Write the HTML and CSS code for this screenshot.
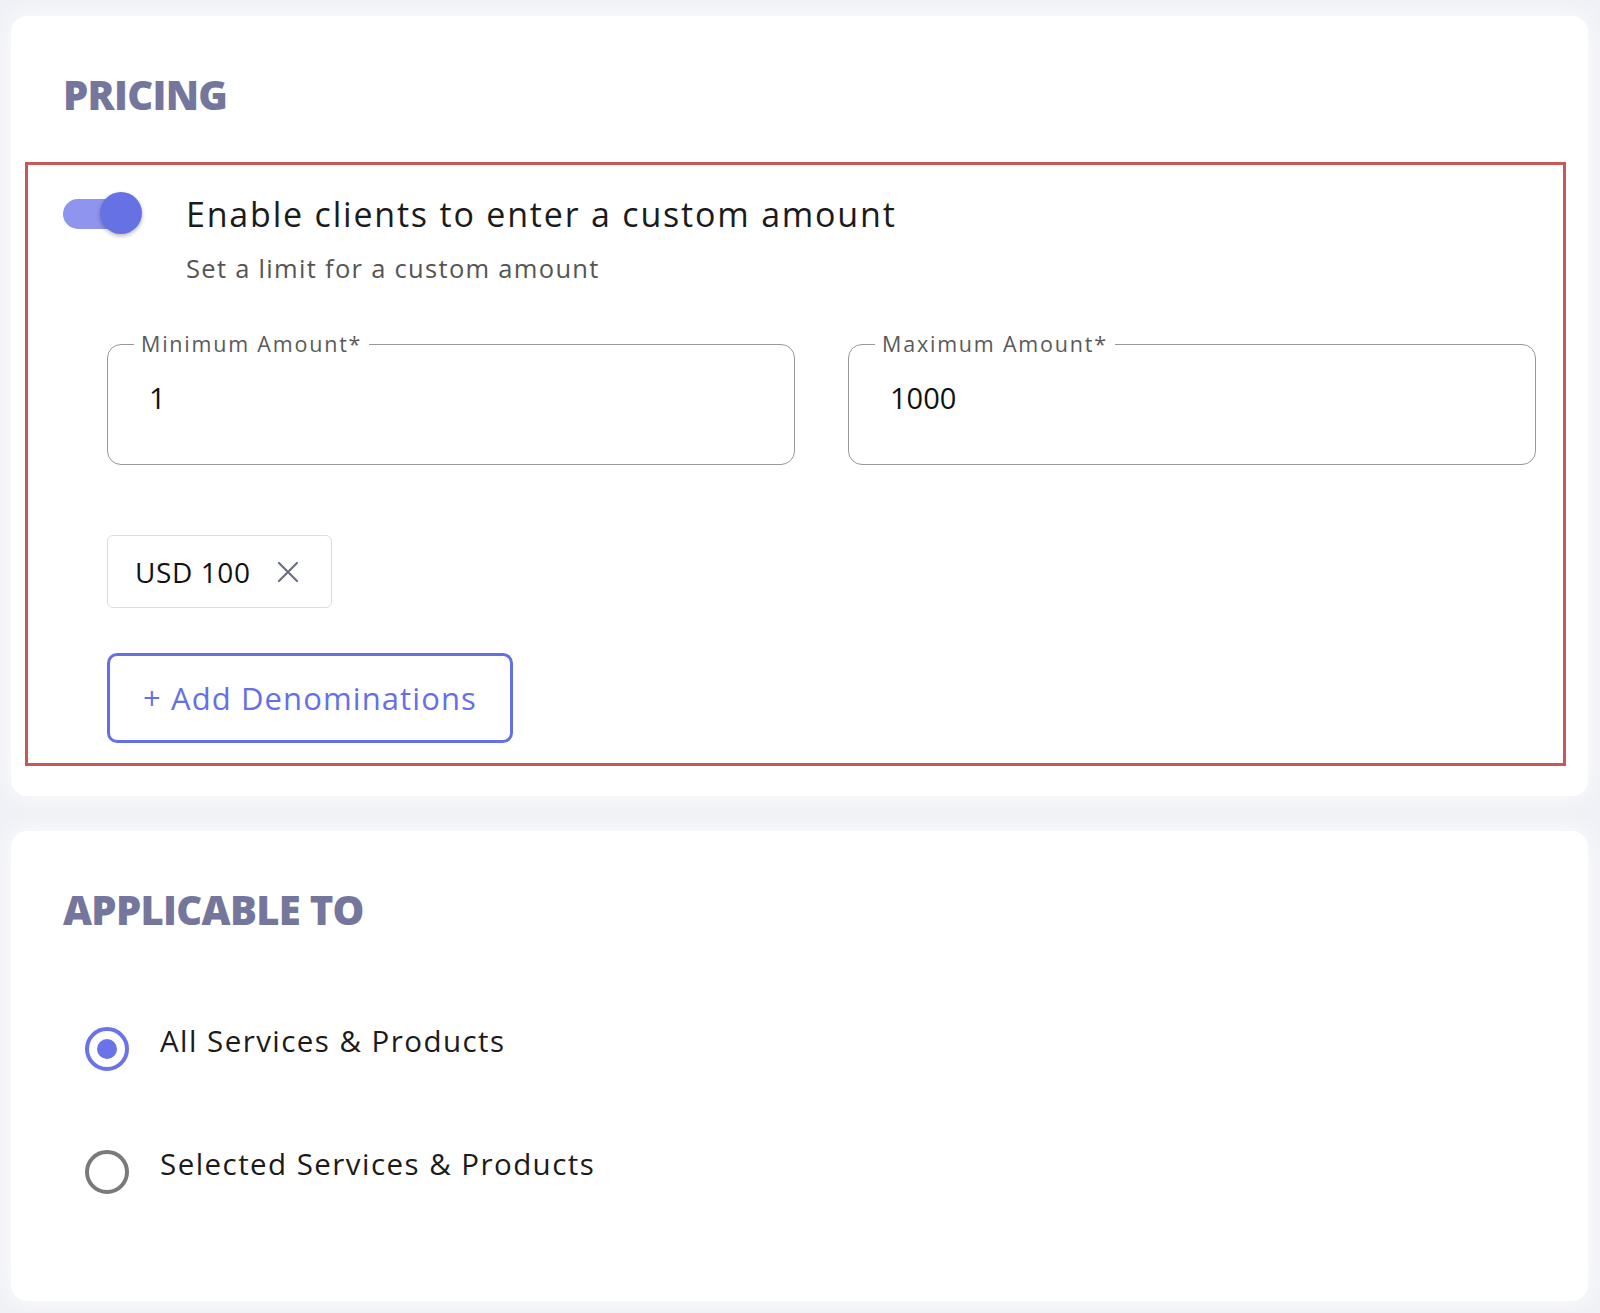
FILE: index.html
```html
<!DOCTYPE html>
<html lang="en">
<head>
<meta charset="utf-8">
<title>Pricing</title>
<link rel="stylesheet" href="styles.css">
</head>
<body>
<div class="page">
  <section class="card card-pricing">
    <h2 class="card-title">PRICING</h2>
    <div class="highlight">
      <div class="toggle-row">
        <span class="switch" role="switch" aria-checked="true">
          <span class="switch-track"></span>
          <span class="switch-knob"></span>
        </span>
        <div class="toggle-text">
          <div class="toggle-title">Enable clients to enter a custom amount</div>
          <div class="toggle-sub">Set a limit for a custom amount</div>
        </div>
      </div>
      <div class="denom">
        <div class="fields">
          <fieldset class="field">
            <legend>Minimum Amount*</legend>
            <div class="field-value">1</div>
          </fieldset>
          <fieldset class="field">
            <legend>Maximum Amount*</legend>
            <div class="field-value">1000</div>
          </fieldset>
        </div>
        <div class="chips">
          <span class="chip">
            <span class="chip-text">USD 100</span>
            <svg class="chip-x" width="22" height="22" viewBox="0 0 22 22" aria-hidden="true">
              <path d="M2 2 L20 20 M20 2 L2 20" stroke="currentColor" stroke-width="2.2" stroke-linecap="round" fill="none"/>
            </svg>
          </span>
        </div>
        <button class="add-btn" type="button">+ Add Denominations</button>
      </div>
    </div>
  </section>

  <section class="card card-applicable">
    <h2 class="card-title">APPLICABLE TO</h2>
    <div class="options">
      <label class="option">
        <span class="radio radio-checked"><span class="radio-dot"></span></span>
        <span class="option-text">All Services &amp; Products</span>
      </label>
      <label class="option">
        <span class="radio"></span>
        <span class="option-text">Selected Services &amp; Products</span>
      </label>
    </div>
  </section>
</div>
</body>
</html>
```

FILE: styles.css
```css
* {
  box-sizing: border-box;
}

html, body {
  margin: 0;
  padding: 0;
}

body {
  background: #f0f1f6;
  font-family: "Open Sans", "Liberation Sans", sans-serif;
  color: #1b1b1b;
}

.page {
  display: flex;
  flex-direction: column;
  gap: 35px;
  padding: 16px 12px 10px 11px;
}

.card {
  background: #ffffff;
  border-radius: 16px;
  box-shadow: 0 0 26px rgba(255, 255, 255, 0.9);
  padding-top: 54.5px;
}

.card-pricing {
  padding-bottom: 30px;
}

.card-title {
  margin: 0 0 0 52px;
  font-size: 40px;
  line-height: 48px;
  font-weight: 800;
  color: #74769b;
  letter-spacing: -0.7px;
}

/* highlighted region */
.highlight {
  margin: 43.5px 22px 0 14px;
  border: 3px solid #c95757;
  padding: 26px 27px 20px 35px;
}

.toggle-row {
  display: flex;
  align-items: flex-start;
  gap: 43px;
}

.switch {
  position: relative;
  display: block;
  flex: 0 0 80px;
  width: 80px;
  height: 44px;
}

.switch-track {
  position: absolute;
  left: 0;
  top: 8px;
  width: 62px;
  height: 30px;
  border-radius: 15px;
  background: #8f95ee;
}

.switch-knob {
  position: absolute;
  left: 37px;
  top: 1px;
  width: 42px;
  height: 42px;
  border-radius: 50%;
  background: #6672e4;
  box-shadow: 0 2px 4px rgba(0, 0, 0, 0.28);
}

.toggle-text {
  margin-top: 3px;
}

.toggle-title {
  font-size: 34px;
  line-height: 40px;
  letter-spacing: 1.8px;
  color: #1b1b1b;
}

.toggle-sub {
  margin-top: 18px;
  font-size: 25.5px;
  line-height: 32px;
  letter-spacing: 1.3px;
  color: #555555;
}

.denom {
  margin-left: 44px;
  margin-top: 49px;
  display: flex;
  flex-direction: column;
  align-items: flex-start;
}

.fields {
  align-self: stretch;
  display: grid;
  grid-template-columns: 1fr 1fr;
  gap: 53px;
}

.field {
  margin: 0;
  min-width: 0;
  padding: 0 0 48px 0;
  border: 1.5px solid #989898;
  border-radius: 14px;
}

.field legend {
  margin-left: 26px;
  padding: 0 7px;
  font-size: 21.5px;
  line-height: 22px;
  letter-spacing: 1.8px;
  color: #5a5a5a;
}

.field-value {
  margin-top: 25px;
  padding-left: 41px;
  font-size: 29px;
  line-height: 36px;
  color: #111111;
}

.chips {
  margin-top: 70px;
  display: flex;
  gap: 12px;
}

.chip {
  display: inline-flex;
  align-items: center;
  gap: 26px;
  height: 73px;
  padding: 0 32px 0 27px;
  border: 1.5px solid #dedede;
  border-radius: 6px;
  background: #ffffff;
}

.chip-text {
  font-size: 28px;
  line-height: 32px;
  letter-spacing: 0.6px;
  color: #111111;
}

.chip-x {
  color: #6b7080;
  display: block;
}

.add-btn {
  margin-top: 45px;
  height: 90px;
  padding: 0 33px;
  border: 3px solid #6670e6;
  border-radius: 10px;
  background: #ffffff;
  color: #6670e6;
  font-family: inherit;
  font-size: 31px;
  line-height: 36px;
  letter-spacing: 1.1px;
  cursor: pointer;
}

/* applicable to */
.card-applicable {
  padding-bottom: 108px;
}

.options {
  margin-top: 92.5px;
  padding-left: 74px;
  display: flex;
  flex-direction: column;
  gap: 79px;
}

.option {
  display: flex;
  align-items: flex-start;
  gap: 31px;
  height: 44px;
  cursor: pointer;
}

.radio {
  flex: 0 0 44px;
  width: 44px;
  height: 44px;
  margin-top: 1px;
  border: 4px solid #7a7a7a;
  border-radius: 50%;
  display: flex;
  align-items: center;
  justify-content: center;
}

.radio-checked {
  border-color: #6a73e8;
}

.radio-dot {
  width: 20px;
  height: 20px;
  border-radius: 50%;
  background: #6a73e8;
}

.option-text {
  font-size: 29.5px;
  line-height: 30px;
  letter-spacing: 1.45px;
  color: #1b1b1b;
}
```
